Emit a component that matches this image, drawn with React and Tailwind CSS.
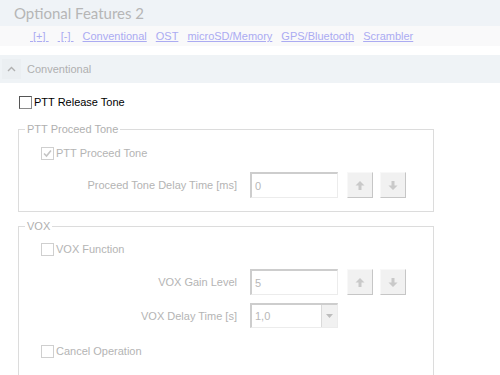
import React from "react";

const font = { fontFamily: '"Liberation Sans", Arial, sans-serif' };

function Check({ checked, disabled }) {
  return (
    <span
      className={
        "inline-flex items-center justify-center w-[13px] h-[13px] border bg-white shrink-0 " +
        (disabled ? "border-[#cfcfcf]" : "border-t-[#555] border-l-[#555] border-b-[#8a8a8a] border-r-[#8a8a8a]")
      }
    >
      {checked && (
        <svg width="9" height="9" viewBox="0 0 9 9">
          <path d="M1 4.5 L3.5 7 L8 1.5" fill="none" stroke="#c4c4c4" strokeWidth="1.6" />
        </svg>
      )}
    </span>
  );
}

function Arrow({ up }) {
  return (
    <svg width="10" height="11" viewBox="0 0 10 11">
      {up ? (
        <path d="M5 1 L9.5 5.5 L6.5 5.5 L6.5 10 L3.5 10 L3.5 5.5 L0.5 5.5 Z" fill="#c9c9c9" />
      ) : (
        <path d="M5 10 L9.5 5.5 L6.5 5.5 L6.5 1 L3.5 1 L3.5 5.5 L0.5 5.5 Z" fill="#c9c9c9" />
      )}
    </svg>
  );
}

function SpinBtn({ up }) {
  return (
    <div className="w-[26px] h-[26px] bg-[#f1f1f1] border border-t-[#f8f8f8] border-l-[#f8f8f8] border-b-[#c6c6c6] border-r-[#c6c6c6] flex items-center justify-center">
      <Arrow up={up} />
    </div>
  );
}

function NumInput({ value }) {
  return (
    <div className="w-[88px] h-[26px] bg-white border border-t-[#cdcdcd] border-l-[#cdcdcd] border-b-[#ececec] border-r-[#ececec] border-t-2 border-l-2 flex items-center pl-[3px] text-[#b8b8b8]">
      {value}
    </div>
  );
}

function Row({ label, children, h = "h-[26px]" }) {
  return (
    <div className={"flex items-center " + h}>
      <div className="w-[218px] text-right text-[#b4b4b4]">{label}</div>
      <div className="ml-[13px] flex items-center">{children}</div>
    </div>
  );
}

function CheckRow({ label, checked, disabled, className = "" }) {
  return (
    <div className={"flex items-center h-[18px] " + className}>
      <Check checked={checked} disabled={disabled} />
      <span className={"ml-[2px] " + (disabled ? "text-[#b4b4b4]" : "text-black")}>{label}</span>
    </div>
  );
}

export default function App() {
  const links = ["\u00a0[+]\u00a0", "\u00a0[-]\u00a0", "Conventional", "OST", "microSD/Memory", "GPS/Bluetooth", "Scrambler"];
  return (
    <div className="w-[500px] h-[375px] overflow-hidden bg-white text-[11px] leading-[14px]" style={font}>
      <div className="h-[26px] bg-[#eff3f7] pl-[14px] flex items-end pb-[4px]">
        <span className="text-[15px] leading-[18px] text-[#b6b6b6]" style={{ fontFamily: 'Lato, "Liberation Sans", sans-serif' }}>
          Optional Features 2
        </span>
      </div>
      <div className="h-[20px] bg-[#f9f9fa] pl-[30px] flex items-center gap-[9px]">
        {links.map((l) => (
          <span key={l} className="underline text-[#ababf2] whitespace-pre">
            {l}
          </span>
        ))}
      </div>
      <div className="mt-[9px] h-[28px] bg-[#eff3f6] flex items-center">
        <div className="ml-[2px] w-[19px] h-[20px] bg-[#ebeff2] flex items-center justify-center">
          <svg width="9" height="6" viewBox="0 0 9 6">
            <path d="M1 5 L4.5 1.5 L8 5" fill="none" stroke="#b0b0b0" strokeWidth="1.4" />
          </svg>
        </div>
        <span className="ml-[6px] text-[#b0b0b0]">Conventional</span>
      </div>

      <CheckRow label="PTT Release Tone" className="mt-[10px] ml-[19px]" />

      <fieldset className="mt-[11px] ml-[18px] w-[416px] border border-[#dcdcdc] p-0 m-0">
        <legend className="ml-[6px] px-[2px] text-[#b0b0b0] leading-[14px]">PTT Proceed Tone</legend>
        <div className="pt-[8px] pb-[13px]">
          <CheckRow label="PTT Proceed Tone" checked disabled className="ml-[22px]" />
          <div className="mt-[10px]">
            <Row label="Proceed Tone Delay Time [ms]">
              <NumInput value="0" />
              <div className="ml-[9px] flex gap-[7px]">
                <SpinBtn up />
                <SpinBtn />
              </div>
            </Row>
          </div>
        </div>
      </fieldset>

      <fieldset className="mt-[7px] ml-[18px] w-[416px] border border-[#dcdcdc] p-0 h-[200px]">
        <legend className="ml-[6px] px-[2px] text-[#b0b0b0] leading-[14px]">VOX</legend>
        <div className="pt-[7px]">
          <CheckRow label="VOX Function" disabled className="ml-[22px]" />
          <div className="mt-[11px]">
            <Row label="VOX Gain Level">
              <NumInput value="5" />
              <div className="ml-[9px] flex gap-[7px]">
                <SpinBtn up />
                <SpinBtn />
              </div>
            </Row>
          </div>
          <div className="mt-[8px]">
            <Row label="VOX Delay Time [s]" h="h-[25px]">
              <div className="w-[88px] h-[25px] bg-white border border-t-[#cdcdcd] border-l-[#cdcdcd] border-b-[#ececec] border-r-[#ececec] border-t-2 border-l-2 flex items-center text-[#b8b8b8]">
                <span className="pl-[3px] flex-1">1,0</span>
                <div className="w-[16px] h-full bg-[#f1f1f1] border-l border-[#dadada] flex items-center justify-center">
                  <svg width="7" height="4" viewBox="0 0 7 4">
                    <path d="M0 0 L7 0 L3.5 4 Z" fill="#bdbdbd" />
                  </svg>
                </div>
              </div>
            </Row>
          </div>
          <CheckRow label="Cancel Operation" disabled className="ml-[22px] mt-[14px]" />
        </div>
      </fieldset>
    </div>
  );
}
